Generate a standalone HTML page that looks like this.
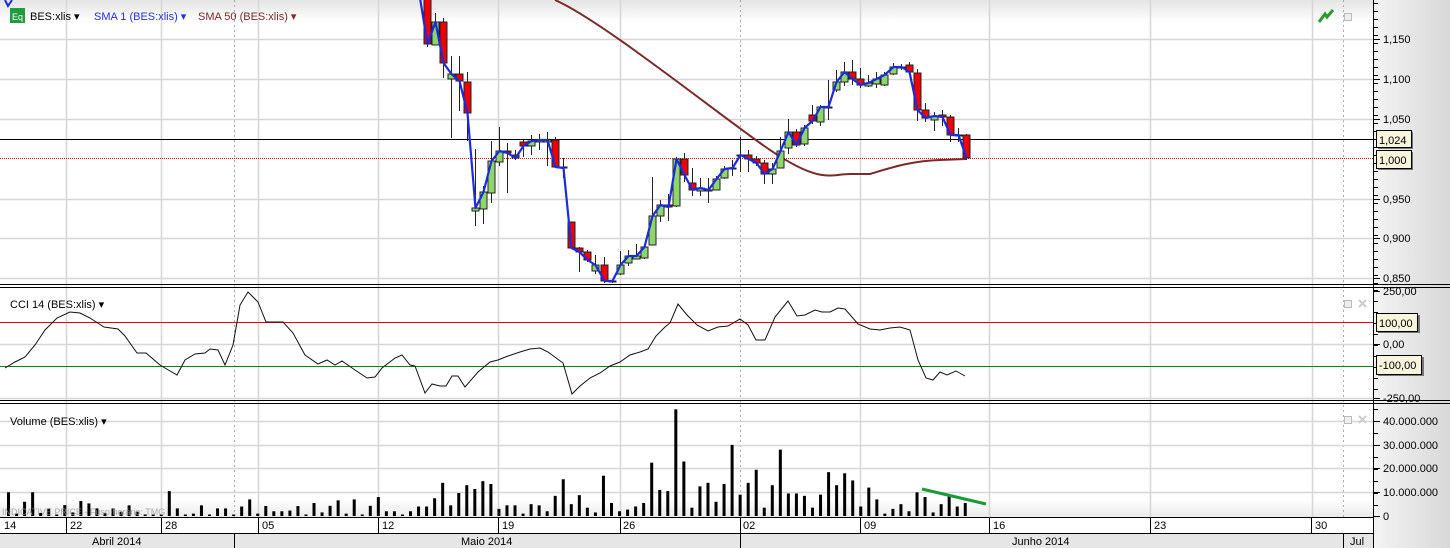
<!DOCTYPE html>
<html><head><meta charset="utf-8">
<style>
html,body{margin:0;padding:0;width:1450px;height:548px;overflow:hidden;background:#fff}
svg{display:block;font-family:"Liberation Sans",Tahoma,sans-serif}
</style></head><body>
<svg id="s" width="1450" height="548" xmlns="http://www.w3.org/2000/svg">
<defs>
<linearGradient id="topg" x1="0" y1="0" x2="0" y2="1"><stop offset="0" stop-color="#e4e4e4"/><stop offset="1" stop-color="#ffffff"/></linearGradient>
<linearGradient id="axg" x1="0" y1="0" x2="1" y2="0"><stop offset="0" stop-color="#f4f4f4"/><stop offset="1" stop-color="#d8d8d8"/></linearGradient>
<linearGradient id="botg" x1="0" y1="0" x2="0" y2="1"><stop offset="0" stop-color="#ffffff"/><stop offset="1" stop-color="#dcdcdc"/></linearGradient>
</defs>
<rect x="0" y="0" width="1373" height="22" fill="url(#topg)"/>
<rect x="0" y="500" width="1373" height="17" fill="url(#botg)" opacity="0.6"/>
<rect x="1373" y="0" width="77" height="548" fill="url(#axg)"/>
<g id="grid"></g>
<g id="main"></g>
<g id="vol"></g>
<!-- separators -->
<g stroke="#000" stroke-width="1">
<line x1="0" y1="284.5" x2="1450" y2="284.5"/><line x1="0" y1="287.5" x2="1450" y2="287.5"/>
<line x1="0" y1="400.5" x2="1450" y2="400.5"/><line x1="0" y1="403.5" x2="1450" y2="403.5"/>
<line x1="1373.5" y1="0" x2="1373.5" y2="548"/>
<line x1="0" y1="517.5" x2="1373" y2="517.5"/>
<line x1="0" y1="533.5" x2="1373" y2="533.5"/>
</g>
<rect x="0" y="534" width="1373" height="14" fill="#e6e6e6"/>
<g font-size="11" fill="#000">
<text x="4" y="529">14</text><text x="70" y="529">22</text><text x="165" y="529">28</text><text x="262" y="529">05</text>
<text x="382" y="529">12</text><text x="502" y="529">19</text><text x="623" y="529">26</text><text x="743" y="529">02</text>
<text x="864" y="529">09</text><text x="993" y="529">16</text><text x="1154" y="529">23</text><text x="1315" y="529">30</text>
<text x="92" y="545">Abril 2014</text><text x="461" y="545">Maio 2014</text><text x="1012" y="545">Junho 2014</text><text x="1350" y="545">Jul</text>
</g>
<g stroke="#000" stroke-width="1">
<line x1="66.5" y1="517" x2="66.5" y2="533"/><line x1="161.5" y1="517" x2="161.5" y2="533"/><line x1="258.5" y1="517" x2="258.5" y2="533"/>
<line x1="378.5" y1="517" x2="378.5" y2="533"/><line x1="498.5" y1="517" x2="498.5" y2="533"/><line x1="620.5" y1="517" x2="620.5" y2="533"/>
<line x1="740.5" y1="517" x2="740.5" y2="533"/><line x1="860.5" y1="517" x2="860.5" y2="533"/><line x1="989.5" y1="517" x2="989.5" y2="533"/>
<line x1="1150.5" y1="517" x2="1150.5" y2="533"/><line x1="1311.5" y1="517" x2="1311.5" y2="533"/>
<line x1="234.5" y1="533" x2="234.5" y2="548"/><line x1="740.5" y1="533" x2="740.5" y2="548"/><line x1="1343.5" y1="533" x2="1343.5" y2="548"/>
</g>
<text x="2" y="515" font-size="9" fill="#999" opacity="0.8">INDICATIVE PRICE - Fuso horário: TMG</text>
<!-- legends -->
<rect x="10" y="8" width="15" height="15" fill="#1f9a3e"/>
<text x="12" y="20" font-size="9" fill="#fff">Eq</text>
<g font-size="11">
<text x="30" y="20" fill="#000">BES:xlis ▾</text>
<text x="94" y="20" fill="#2233dd">SMA 1 (BES:xlis) ▾</text>
<text x="198" y="20" fill="#7a2a2a">SMA 50 (BES:xlis) ▾</text>
<text x="10" y="308" fill="#000">CCI 14 (BES:xlis) ▾</text>
<text x="10" y="425" fill="#000">Volume (BES:xlis) ▾</text>
</g>
<path d="M1319 22 L1325 14 L1327 17 L1333 10" stroke="#2a9a2a" stroke-width="3" fill="none"/>
<g fill="#eee" stroke="#bbb"><rect x="1344.5" y="13.5" width="7" height="7"/><rect x="1344.5" y="300.5" width="7" height="7"/><rect x="1344.5" y="416.5" width="7" height="7"/></g>
<g stroke="#ccc" stroke-width="2"><path d="M1359 300 l7 7 M1366 300 l-7 7"/><path d="M1359 416 l7 7 M1366 416 l-7 7"/></g>
<g id="axis" font-size="11" fill="#000"></g>
<!-- callouts -->
<g font-size="11">
<rect x="1378" y="132" width="35" height="17" fill="#777"/><rect x="1376.5" y="130.5" width="35" height="17" fill="#f7f5dc" stroke="#000"/><text x="1379" y="144">1,024</text>
<rect x="1378" y="152" width="35" height="18" fill="#777"/><rect x="1376.5" y="150.5" width="35" height="18" fill="#f7f5dc" stroke="#000"/><text x="1379" y="164">1,000</text>
<rect x="1378" y="315" width="42" height="18" fill="#777"/><rect x="1376.5" y="313.5" width="41" height="18" fill="#f7f5dc" stroke="#000"/><text x="1379" y="327">100,00</text>
<rect x="1378" y="357" width="46" height="19" fill="#777"/><rect x="1376.5" y="355.5" width="45" height="19" fill="#f7f5dc" stroke="#000"/><text x="1379" y="369">-100,00</text>
</g>
</svg>
<script>
var NS="http://www.w3.org/2000/svg";
function el(p,t,a,txt){var e=document.createElementNS(NS,t);for(var k in a)e.setAttribute(k,a[k]);if(txt!==undefined)e.textContent=txt;document.getElementById(p).appendChild(e);return e;}
// grid
var vx=[66,161,258,378,498,620,860,989,1150,1312];
vx.forEach(function(x){el('grid','line',{x1:x+.5,y1:0,x2:x+.5,y2:517,stroke:'#d6d6d6','stroke-width':1.5});});
[234,740,1343].forEach(function(x){el('grid','line',{x1:x+.5,y1:0,x2:x+.5,y2:517,stroke:'#aaa','stroke-dasharray':'2,3'});});
[39,79,119,199,238,278].forEach(function(y){el('grid','line',{x1:0,y1:y+.5,x2:1373,y2:y+.5,stroke:'#d6d6d6','stroke-width':1.5});});
[344,398].forEach(function(y){el('grid','line',{x1:0,y1:y+.5,x2:1373,y2:y+.5,stroke:'#d6d6d6','stroke-width':1.5});});
[421,445,468,492].forEach(function(y){el('grid','line',{x1:0,y1:y+.5,x2:1373,y2:y+.5,stroke:'#d6d6d6','stroke-width':1.5});});
el('grid','line',{x1:0,y1:139.5,x2:1373,y2:139.5,stroke:'#000'});
el('grid','line',{x1:0,y1:158.5,x2:1373,y2:158.5,stroke:'#f00','stroke-dasharray':'1,1'});
el('grid','line',{x1:0,y1:322.5,x2:1373,y2:322.5,stroke:'#e00'});
el('grid','line',{x1:0,y1:366.5,x2:1373,y2:366.5,stroke:'#080'});
// SMA50
el('main','path',{d:'M555 0 C600 20 700 100 760 143 S 830 174 850 174 L870 174 C890 168 910 161 940 160 L966 159',stroke:'#7a2a2a','stroke-width':2,fill:'none'});
// candles [x, o, c, h, l]
var C=[[427,-5,44,-5,47],[435,45,22,13,45],[443,22,63,18,78],[451,79,74,56,138],[459,74,81,56,111],[467,82,113,72,141],
[475,211,208,149,226],[483,209,192,186,224],[491,193,161,141,203],[499,162,151,127,166],[507,151,153,143,193],[515,155,158,150,160],
[523,142,146,140,157],[531,146,141,135,155],[539,142,140,134,150],[547,142,140,132,166],[555,140,167,137,167],[563,167,168,158,178],
[571,222,248,222,248],[579,248,252,247,272],[587,252,260,250,262],[595,271,265,255,274],[604,265,281,257,283],[612,281,281,281,283],
[620,274,265,251,275],[628,263,256,250,266],[636,259,256,244,259],[644,258,247,245,259],[652,245,216,177,245],[660,216,205,200,222],
[668,205,207,194,221],[676,206,159,157,207],[684,159,175,153,182],[692,183,190,168,196],[700,191,188,178,196],[708,190,190,178,203],
[716,190,179,176,190],[724,178,169,166,179],[732,168,168,160,176],[740,155,155,137,172],[748,155,159,150,172],[756,159,163,156,166],
[764,163,174,160,184],[772,174,169,163,184],[780,168,151,137,168],[788,148,132,119,154],[796,132,145,129,147],[804,144,128,125,146],
[812,115,121,105,124],[820,122,107,105,126],[828,107,107,80,120],[836,90,82,70,92],[844,82,72,62,86],[852,72,79,60,85],
[860,79,85,68,88],[868,86,83,75,87],[876,84,79,72,88],[884,85,75,72,86],[893,74,67,63,75],[901,67,67,64,70],
[909,65,72,62,73],[917,73,110,69,121],[925,110,118,103,122],[934,120,116,112,131],[942,115,117,110,126],[950,117,135,115,142],
[958,135,135,128,142],[966,135,158,134,160]];
var pts=[[420,-2]];
C.forEach(function(c){
 var x=c[0],o=c[1],cl=c[2],h=c[3],l=c[4];
 el('main','line',{x1:x+.5,y1:h,x2:x+.5,y2:l,stroke:'#222'});
 var top=Math.min(o,cl),bh=Math.max(Math.abs(cl-o),1);
 var col=cl>o?'#e00':(cl<o?'#8fd66a':'#222');
 el('main','rect',{x:x-3,y:top,width:7,height:bh,fill:col,stroke:'#222','stroke-width':1});
 pts.push([x+.5,cl]);
});
el('main','path',{d:'M'+pts.map(function(p){return p.join(' ')}).join(' L'),stroke:'#1a2be0','stroke-width':2.2,fill:'none','stroke-linejoin':'round'});
el('main','path',{d:'M5 0 L8 6 L12 0',stroke:'#1a2be0','stroke-width':2,fill:'none'});
// CCI
var cci=[[5,368],[15,362],[25,357],[35,345],[45,330],[57,318],[70,312],[80,313],[90,318],[104,327],[118,329],[125,336],[137,353],[146,353],[160,365],[165,368],[177,375],[185,360],[195,354],[205,353],[210,349],[218,350],[225,365],[233,345],[240,305],[248,292],[258,302],[266,322],[275,322],[283,322],[293,333],[305,355],[318,364],[327,360],[335,365],[342,361],[355,370],[367,378],[375,377],[382,368],[395,358],[402,355],[410,365],[415,366],[425,393],[432,384],[440,386],[446,386],[452,376],[458,376],[465,387],[478,372],[490,362],[498,360],[508,356],[520,352],[530,349],[540,348],[548,352],[563,363],[572,394],[580,386],[590,378],[600,373],[610,366],[620,362],[630,355],[640,352],[648,349],[656,336],[665,327],[670,323],[678,304],[687,315],[697,325],[708,331],[718,327],[728,326],[740,319],[748,325],[756,340],[765,340],[775,317],[788,301],[797,316],[805,315],[815,310],[822,312],[830,312],[838,308],[845,309],[858,324],[870,329],[880,330],[890,328],[900,327],[910,330],[918,360],[926,378],[933,380],[940,372],[947,375],[956,371],[965,376]];
el('main','path',{d:'M'+cci.map(function(p){return p.join(' ')}).join(' L'),stroke:'#111','stroke-width':1,fill:'none'});
// volume
var V=[10,1,6,10,1.3,3.2,0.5,4.6,1.5,6.3,5.3,3.2,1.3,3.2,1.8,4.5,1.8,0.5,0.3,0.5,10.5,3.2,0.5,1,4.5,0.5,3.2,3.2,0.5,4,7,1,4.2,2,2,2.3,4.2,0.5,5.5,1.5,4.3,6.6,1,7,0.5,4.3,8,2,2,
0,2,4,4,7.5,14,4.5,9.7,13,11.4,14.7,13.5,3,4.5,4.5,1,5,4.5,2,8.5,15.5,5,8.8,3.5,1.5,17,5.5,2,2.7,4,5.5,22.5,11,10.5,45,23,3.5,12.5,14,6,13.5,30,9,14,19.5,3.5,13,28,9.5,9.5,8.5,3.5,9,18.5,13,18,15,4,12,7,1,3,5,2,10,8,1.5,5,8.5,4,5.5];
V.forEach(function(v,i){var x=8+i*8.04,h=Math.max(v*2.37,1.5);el('vol','rect',{x:x-1,y:516-h,width:3,height:h,fill:'#000'});});
el('vol','line',{x1:922,y1:489,x2:986,y2:504,stroke:'#1a9a3a','stroke-width':3});
// axis ticks + labels
function tick(y,len){el('axis','line',{x1:1374,y1:y+.5,x2:1374+len,y2:y+.5,stroke:'#000'});}
for(var y=3;y<284;y+=8)tick(y,4);
[[39,'1,150'],[79,'1,100'],[119,'1,050'],[199,'0,950'],[238,'0,900'],[278,'0,850']].forEach(function(a){tick(a[0],6);el('axis','text',{x:1383,y:a[0]+4},a[1]);});
for(var y=290;y<400;y+=11)tick(y,4);
[[291,'250,00'],[344,'0,00'],[398,'-250,00']].forEach(function(a){tick(a[0],6);el('axis','text',{x:1383,y:a[0]+4},a[1]);});
for(var y=409;y<517;y+=12)tick(y,4);
[[421,'40.000.000'],[445,'30.000.000'],[468,'20.000.000'],[492,'10.000.000'],[516,'0']].forEach(function(a){tick(a[0],6);el('axis','text',{x:1383,y:a[0]+4},a[1]);});
</script>
</body></html>
